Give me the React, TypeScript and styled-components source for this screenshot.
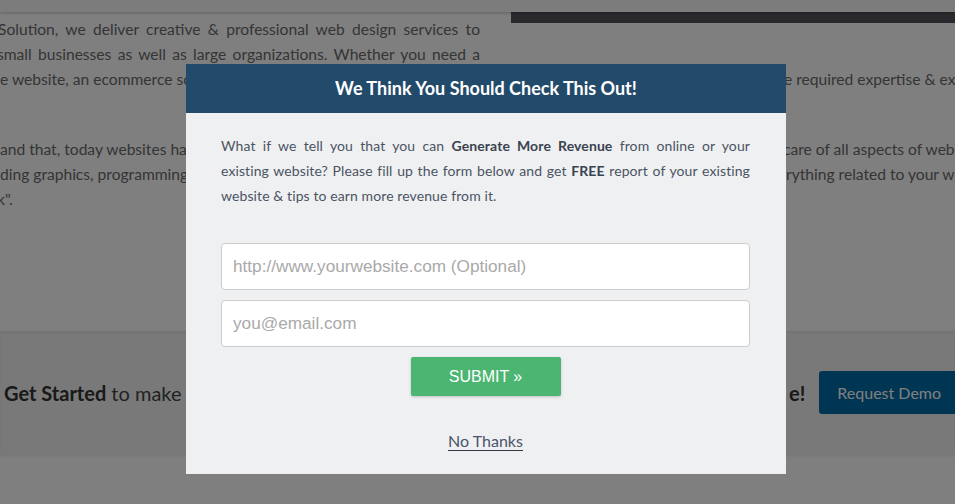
import styled, { createGlobalStyle } from "styled-components"

const GlobalStyle = createGlobalStyle`
  html, body {
    margin: 0;
    padding: 0;
    background: #ffffff;
    overflow: hidden;
  }
  body {
    font-family: Lato, "Open Sans", sans-serif;
  }
`

const Page = styled.div`
  position: relative;
  width: 955px;
  height: 504px;
  overflow: hidden;
  background: #ffffff;
`

const TopBar = styled.div`
  height: 12px;
  background: #f9f9f9;
  box-shadow: 0 1px 3px rgba(0, 0, 0, 0.25);
  position: relative;
  z-index: 1;
`

const Content = styled.div`
  padding-top: 5px;
  color: #6a6a6a;
  font-size: 15.6px;
  line-height: 25px;
`

const HeroImage = styled.div`
  float: right;
  width: 444px;
  height: 11px;
  margin: -5px 0 30px 31px;
  background: #55545c;
`

const Para = styled.div<{ $gap: number }>`
  margin-bottom: ${({ $gap }) => $gap}px;
`

const Line = styled.div<{ $shift: number }>`
  margin-left: ${({ $shift }) => $shift}px;
  text-align: justify;
  text-align-last: justify;
`

const SplitLine = styled.div`
  display: flex;
  white-space: nowrap;
`

const LeftSeg = styled.div<{ $width: number; $shift?: number }>`
  flex: 0 0 ${({ $width }) => $width}px;
  overflow: hidden;
  margin-left: ${({ $shift = 0 }) => $shift}px;
`

const RightSeg = styled.div<{ $shift: number }>`
  margin-left: ${({ $shift }) => $shift}px;
`

const Spacer = styled.div<{ $h: number }>`
  height: ${({ $h }) => $h}px;
  clear: both;
`

const Band = styled.div`
  display: flex;
  align-items: center;
  height: 123px;
  background: #f3f3f3;
  box-shadow: inset 0 2px 3px rgba(0, 0, 0, 0.06), 0 2px 3px rgba(0, 0, 0, 0.08);
  white-space: nowrap;
`

const BandLead = styled.div`
  flex: 0 0 785px;
  margin-left: 4px;
  overflow: hidden;
  font-size: 20px;
  color: #444;

  b {
    color: #333;
    font-weight: 700;
  }
`

const BandTail = styled.div`
  font-size: 20px;
  font-weight: 700;
  color: #333;
`

const DemoButton = styled.button`
  margin-left: 14px;
  flex: 0 0 auto;
  height: 43px;
  padding: 0 18px;
  border: none;
  border-radius: 3px;
  background: #006aa6;
  color: #ffffff;
  font-family: Lato, sans-serif;
  font-size: 16px;
  cursor: pointer;
`

const Overlay = styled.div`
  position: absolute;
  inset: 0;
  z-index: 10;
  display: flex;
  justify-content: center;
  align-items: flex-start;
  padding: 64px 0 0 17px;
  background: rgba(0, 0, 0, 0.5);
`

const Modal = styled.div`
  width: 600px;
  height: 410px;
  background: #eff0f2;
  display: flex;
  flex-direction: column;
`

const ModalHeader = styled.div`
  height: 49px;
  display: flex;
  align-items: center;
  justify-content: center;
  background: #224a6b;
  color: #ffffff;
  font-size: 18px;
  font-weight: 700;
  padding-bottom: 1px;
  box-sizing: border-box;
`

const ModalBody = styled.div`
  padding: 20px 36px 0 35px;
  display: flex;
  flex-direction: column;
  align-items: center;
`

const Intro = styled.div`
  margin: 0 0 35px;
  align-self: stretch;
  font-size: 14px;
  line-height: 25px;
  letter-spacing: 0.1px;
  color: #4b5462;

  b {
    color: #3a4350;
  }
`

const IntroLine = styled.div<{ $last?: boolean }>`
  text-align: justify;
  text-align-last: ${({ $last }) => ($last ? "left" : "justify")};
`

const Field = styled.input`
  box-sizing: border-box;
  align-self: stretch;
  height: 47px;
  margin-bottom: 10px;
  padding: 0 11px;
  border: 1px solid #cccccc;
  border-radius: 4px;
  background: #ffffff;
  font-family: "Liberation Sans", Arial, sans-serif;
  font-size: 17.2px;
  color: #555;
  outline: none;

  &::placeholder {
    color: #a9a9a9;
  }
`

const SubmitButton = styled.button`
  width: 150px;
  height: 39px;
  border: none;
  border-radius: 2px;
  background: #4cb571;
  box-shadow: 0 1px 3px rgba(0, 0, 0, 0.2);
  color: #ffffff;
  font-family: "Liberation Sans", Arial, sans-serif;
  font-size: 16px;
  cursor: pointer;
`

const NoThanks = styled.a`
  margin-top: 36px;
  font-size: 16px;
  line-height: 18px;
  color: #4a5568;
  text-decoration: none;
  border-bottom: 1px solid #2f3a4b;
  cursor: pointer;
`

export default function App() {
  return (
    <>
      <GlobalStyle />
      <Page>
        <TopBar />
        <Content>
          <HeroImage />
          <Para $gap={45}>
            <Line $shift={-2}>Solution, we deliver creative &amp; professional web design services to</Line>
            <Line $shift={-3}>small businesses as well as large organizations. Whether you need a</Line>
            <SplitLine>
              <LeftSeg $width={786}>e website, an ecommerce solution or a custom web application, our team has the</LeftSeg>
              <RightSeg $shift={-2}>e required expertise &amp; experience to deliver it.</RightSeg>
            </SplitLine>
          </Para>
          <Para $gap={0}>
            <SplitLine>
              <LeftSeg $width={786}>and that, today websites have become complex &amp; our team takes good</LeftSeg>
              <RightSeg $shift={-3}>care of all aspects of web development,</RightSeg>
            </SplitLine>
            <SplitLine>
              <LeftSeg $width={786}>ding graphics, programming, hosting, search engine optimization and eve</LeftSeg>
              <RightSeg $shift={0}>rything related to your website.</RightSeg>
            </SplitLine>
            <SplitLine>
              <LeftSeg $width={60} $shift={-3}>k".</LeftSeg>
            </SplitLine>
          </Para>
          <Spacer $h={119} />
        </Content>
        <Band>
          <BandLead>
            <b>Get Started</b> to make your website work for your business, get in touch with us tod
          </BandLead>
          <BandTail>e!</BandTail>
          <DemoButton>Request Demo</DemoButton>
        </Band>

        <Overlay>
          <Modal>
            <ModalHeader>We Think You Should Check This Out!</ModalHeader>
            <ModalBody>
              <Intro>
                <IntroLine>
                  What if we tell you that you can <b>Generate More Revenue</b> from online or your
                </IntroLine>
                <IntroLine>
                  existing website? Please fill up the form below and get <b>FREE</b> report of your existing
                </IntroLine>
                <IntroLine $last>website &amp; tips to earn more revenue from it.</IntroLine>
              </Intro>
              <Field type="text" placeholder="http://www.yourwebsite.com (Optional)" />
              <Field type="email" placeholder="you@email.com" />
              <SubmitButton>SUBMIT »</SubmitButton>
              <NoThanks>No Thanks</NoThanks>
            </ModalBody>
          </Modal>
        </Overlay>
      </Page>
    </>
  )
}
